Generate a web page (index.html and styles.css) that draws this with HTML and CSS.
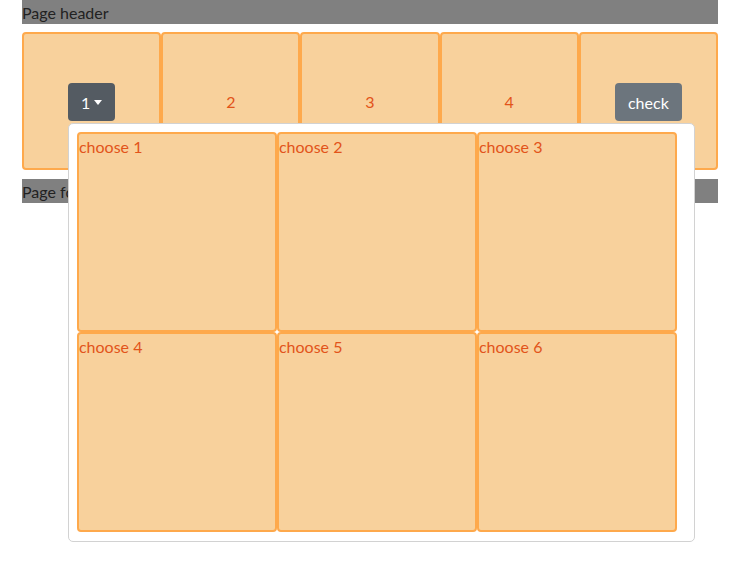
FILE: index.html
```html
<!DOCTYPE html>
<html>
<head>
<meta charset="utf-8">
<link rel="stylesheet" href="styles.css">
</head>
<body>
<div class="page">
  <div class="bar">Page header</div>
  <div class="cards">
    <div class="card">
      <div class="dropdown">
        <button class="btn btn-active toggle">1</button>
        <div class="menu">
          <div class="cell">choose 1</div>
          <div class="cell">choose 2</div>
          <div class="cell">choose 3</div>
          <div class="cell">choose 4</div>
          <div class="cell">choose 5</div>
          <div class="cell">choose 6</div>
        </div>
      </div>
    </div>
    <div class="card">2</div>
    <div class="card">3</div>
    <div class="card">4</div>
    <div class="card"><button class="btn">check</button></div>
  </div>
  <div class="bar footer">Page footer</div>
</div>
</body>
</html>
```

FILE: styles.css
```css
html, body {
  margin: 0;
  padding: 0;
  background: #fff;
}
html {
  min-height: 100%;
}
body {
  min-height: 576px;
  font-family: "Lato", "Noto Sans", "Liberation Sans", sans-serif;
  font-size: 16px;
  line-height: 24px;
  color: #212529;
}
.page {
  padding: 0 28px 0 22px;
}
.bar {
  background: #808080;
  color: #222;
  height: 24px;
  box-sizing: border-box;
  padding-top: 1px;
}
.footer {
  margin-top: 9px;
}
.cards {
  margin-top: 8px;
  display: grid;
  grid-template-columns: repeat(5, 1fr);
}
.card {
  box-sizing: border-box;
  height: 138px;
  padding-top: 1px;
  background: #f8d19c;
  border: 2px solid #fea94c;
  border-radius: 4px;
  color: #e2541a;
  display: flex;
  align-items: center;
  justify-content: center;
}
.dropdown {
  position: relative;
  display: inline-block;
}
.btn {
  font-family: inherit;
  font-size: 16px;
  line-height: 24px;
  padding: 7px 12px 5px;
  border: 1px solid transparent;
  border-radius: 4px;
  background: #6c757d;
  color: #fff;
  cursor: pointer;
}
.btn-active {
  background: #545b62;
}
.toggle::after {
  content: "";
  display: inline-block;
  margin-left: 4px;
  vertical-align: 4px;
  border-top: 5px solid #fff;
  border-left: 4px solid transparent;
  border-right: 4px solid transparent;
}
.menu {
  position: absolute;
  top: 100%;
  left: 0;
  margin-top: 2px;
  z-index: 10;
  box-sizing: border-box;
  width: 627px;
  padding: 8px 18px 9px 8px;
  background: #fff;
  border: 1px solid #d2d2d2;
  border-radius: 5px;
  display: grid;
  grid-template-columns: repeat(3, 200px);
  grid-auto-rows: 200px;
}
.cell {
  box-sizing: border-box;
  background: #f8d19c;
  border: 2px solid #fea94c;
  border-radius: 4px;
  color: #e2541a;
  padding: 1px 0 0;
}
```
